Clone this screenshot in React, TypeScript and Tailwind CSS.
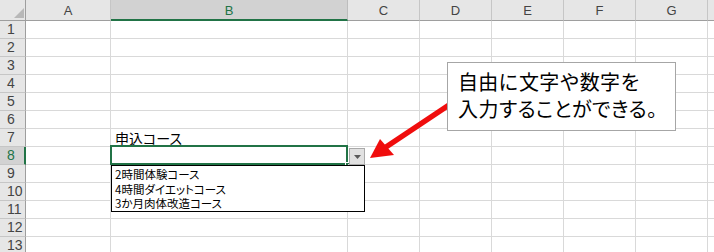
import React from "react";

const COLS = ["A", "B", "C", "D", "E", "F", "G", "H"];
const ROWS = Array.from({ length: 13 }, (_, i) => i + 1);

const jp = "font-['Noto_Sans_CJK_JP','Noto_Sans',sans-serif]";

function ColHeader({ l }: { l: string }) {
  const active = l === "B";
  return (
    <div
      className={
        active
          ? "flex items-center justify-center bg-[#d2d2d2] border-r border-r-[#bdbdbd] border-b-2 border-b-[#217346] text-[#217346] text-[13px] font-['Liberation_Sans',sans-serif] pt-[2px]"
          : "flex items-center justify-center bg-[#e6e6e6] border-r border-r-[#c6c6c6] border-b border-b-[#9e9e9e] text-[#444] text-[13px] font-['Liberation_Sans',sans-serif] pt-[1px]"
      }
    >
      {l === "H" ? "" : l}
    </div>
  );
}

function RowHeader({ n }: { n: number }) {
  const active = n === 8;
  return (
    <div
      className={
        active
          ? "flex items-center pl-[7px] bg-[#d2d2d2] border-r-2 border-r-[#217346] border-b border-b-[#c6c6c6] text-[#217346] text-[14px] font-['Liberation_Sans',sans-serif]"
          : "flex items-center pl-[7px] bg-[#e6e6e6] border-r border-r-[#9e9e9e] border-b border-b-[#c6c6c6] text-[#444] text-[14px] font-['Liberation_Sans',sans-serif]"
      }
    >
      {n}
    </div>
  );
}

function Cell({ r, c }: { r: number; c: string }) {
  const selected = r === 8 && c === "B";
  return (
    <div className="relative border-r border-b border-[#d9d9d9] flex items-center pl-[4px] pt-[1px] text-[14px] text-black">
      {r === 7 && c === "B" ? <span className={`${jp} [font-feature-settings:'palt']`}>申込コース</span> : null}
      {selected ? (
        <div className="absolute left-[-1px] top-[-2px] w-[238px] h-[20px] border-2 border-[#217346]">
          <div className="absolute right-[-4px] bottom-[-4px] w-[5px] h-[5px] bg-[#217346] border border-white" />
        </div>
      ) : null}
    </div>
  );
}

export default function App() {
  return (
    <div className="relative w-[714px] h-[252px] overflow-hidden bg-white">
      <div className="grid grid-cols-[26px_85px_237px_72px_72px_72px_72px_72px_72px] grid-rows-[21px_repeat(13,18px)] w-[780px]">
        <div className="relative bg-[#e6e6e6] border-r border-r-[#9e9e9e] border-b border-b-[#9e9e9e]">
          <svg className="absolute left-[14px] top-[8px]" width="10" height="10" viewBox="0 0 10 10">
            <polygon points="10,0 10,10 0,10" fill="#b8b8b8" />
          </svg>
        </div>
        {COLS.map((l) => (
          <ColHeader key={l} l={l} />
        ))}
        {ROWS.map((r) => (
          <React.Fragment key={r}>
            <RowHeader n={r} />
            {COLS.map((c) => (
              <Cell key={c} r={r} c={c} />
            ))}
          </React.Fragment>
        ))}
      </div>

      {/* dropdown button */}
      <div className="absolute left-[349px] top-[148px] w-[16px] h-[17px] bg-[#e1e1e1] border border-[#a9a9a9] flex items-center justify-center">
        <svg width="7" height="4" viewBox="0 0 7 4">
          <polygon points="0,0 7,0 3.5,4" fill="#5a5a5a" />
        </svg>
      </div>

      {/* dropdown list */}
      <div className={`absolute left-[111px] top-[165px] w-[254px] h-[47px] bg-white border border-black pl-[3px] pt-[1px] text-[11.5px] leading-[14.5px] text-black ${jp} [font-feature-settings:'palt']`}>
        <div>2時間体験コース</div>
        <div>4時間ダイエットコース</div>
        <div>3か月肉体改造コース</div>
      </div>

      {/* arrow */}
      <svg className="absolute left-0 top-0" width="714" height="252" viewBox="0 0 714 252">
        <line x1="386" y1="147" x2="452" y2="103" stroke="#f00d0d" strokeWidth="5.5" />
        <polygon points="370,158 380,139 394,155" fill="#f00d0d" />
      </svg>

      {/* callout */}
      <div className={`absolute left-[447px] top-[62px] w-[229px] h-[69px] bg-white border border-[#a6a6a6] pl-[10px] pt-[5px] text-[20px] leading-[27px] text-black whitespace-nowrap ${jp}`}>
        <div className="tracking-[0.3px]">自由に文字や数字を</div>
        <div className="[font-feature-settings:'palt'] tracking-[0.5px]">入力することができる。</div>
      </div>
    </div>
  );
}
